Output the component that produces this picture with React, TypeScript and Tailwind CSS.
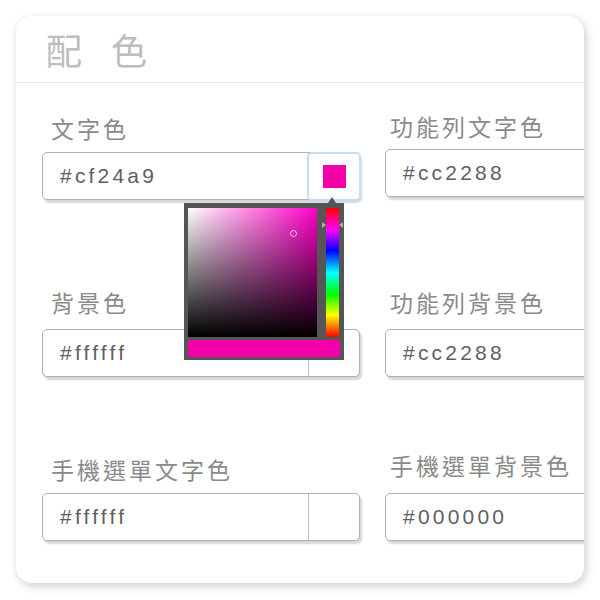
import React from 'react'

interface Field {
  label: string
  value: string
  mt: string
  mb: string
  pl: string
  swatch?: string
  open?: boolean
}

const leftFields: Field[] = [
  { label: '文字色', value: '#cf24a9', mt: 'mt-[29px]', mb: 'mb-[8px]', pl: 'pl-[9px]', swatch: '#f400a8', open: true },
  { label: '背景色', value: '#ffffff', mt: 'mt-[86px]', mb: 'mb-[11px]', pl: 'pl-[9px]' },
  { label: '手機選單文字色', value: '#ffffff', mt: 'mt-[76px]', mb: 'mb-[8px]', pl: 'pl-[9px]' },
]

const rightFields: Field[] = [
  { label: '功能列文字色', value: '#cc2288', mt: 'mt-[27px]', mb: 'mb-[7px]', pl: 'pl-[5px]' },
  { label: '功能列背景色', value: '#cc2288', mt: 'mt-[89px]', mb: 'mb-[11px]', pl: 'pl-[5px]' },
  { label: '手機選單背景色', value: '#000000', mt: 'mt-[72px]', mb: 'mb-[12px]', pl: 'pl-[5px]' },
]

function Picker() {
  return (
    <div className="absolute left-[141px] top-[50px] z-10 w-[160px] bg-[#555555] px-[4px] pt-[5px] pb-[3px]">
      {/* arrow */}
      <div className="absolute -top-[6px] left-[144px] h-0 w-0 border-x-[4px] border-b-[6px] border-x-transparent border-b-[#555555]" />
      <div className="flex">
        <div className="relative h-[129px] w-[129px] bg-[#ff00c7]">
          <div className="absolute inset-0 bg-gradient-to-r from-white to-transparent" />
          <div className="absolute inset-0 bg-gradient-to-t from-black to-transparent" />
          <div className="absolute left-[102px] top-[22px] h-[7px] w-[7px] rounded-full border border-[#f2c6ea]" />
        </div>
        <div className="relative ml-[9px] h-[129px] w-[13px] bg-[linear-gradient(to_bottom,#ff0000_0%,#ff00ff_17%,#0000ff_33%,#00ffff_50%,#00ff00_67%,#ffff00_83%,#ff0000_100%)]">
          <div className="absolute -left-[4px] top-[14px] h-0 w-0 border-y-[3px] border-l-[4px] border-y-transparent border-l-[#b0b0b0]" />
          <div className="absolute -right-[4px] top-[14px] h-0 w-0 border-y-[3px] border-r-[4px] border-y-transparent border-r-[#b0b0b0]" />
        </div>
      </div>
      <div className="mt-[3px] h-[17px] w-[152px] bg-[#f400a8]" />
    </div>
  )
}

function ColorField({ field }: { field: Field }) {
  return (
    <div className={`flex flex-col ${field.mt}`}>
      <label
        className={`h-8 text-[23px] leading-8 tracking-[3px] text-[#8a8a8a] ${field.pl} ${field.mb}`}
        style={{ fontFamily: '"Noto Sans CJK TC", "Noto Sans", sans-serif' }}
      >
        {field.label}
      </label>
      <div className="relative flex h-12 w-[318px] shrink-0 rounded-[5px] border border-[#b0b0b0] bg-white shadow-[2px_3px_2px_rgba(0,0,0,0.16)]">
        <div
          className="flex flex-1 items-center pl-[17px] text-[21px] tracking-[3.2px] text-[#5f5f5f]"
          style={{ fontFamily: '"Liberation Sans", Arial, sans-serif' }}
        >
          {field.value}
        </div>
        <div className="relative flex w-[51px] items-center justify-center border-l border-[#bcbcbc]">
          {field.open && (
            <div className="absolute -left-[2px] -top-[1px] -right-[2px] -bottom-[2px] rounded-[5px] border-2 border-[#c6dcf8] bg-white" />
          )}
          {field.swatch && (
            <div className="relative h-[23px] w-[23px]" style={{ backgroundColor: field.swatch }} />
          )}
        </div>
        {field.open && <Picker />}
      </div>
    </div>
  )
}

export default function App() {
  return (
    <div className="h-[600px] w-[600px] bg-white p-4">
      <div className="h-[567px] w-[568px] overflow-hidden rounded-2xl bg-white shadow-[2px_3px_10px_rgba(0,0,0,0.2)]">
        <div className="flex h-[67px] items-center border-b border-[#e6e6e6] pl-[30px]">
          <h2
            className="flex gap-[29px] text-[36px] leading-none text-[#bdbdbd]"
            style={{ fontFamily: '"Noto Sans CJK TC", "Noto Sans", sans-serif' }}
          >
            <span>配</span>
            <span>色</span>
          </h2>
        </div>
        <div className="flex gap-[25px] pl-[26px]">
          <div className="flex flex-col">
            {leftFields.map((f) => (
              <ColorField key={f.label} field={f} />
            ))}
          </div>
          <div className="flex flex-col">
            {rightFields.map((f) => (
              <ColorField key={f.label} field={f} />
            ))}
          </div>
        </div>
      </div>
    </div>
  )
}
